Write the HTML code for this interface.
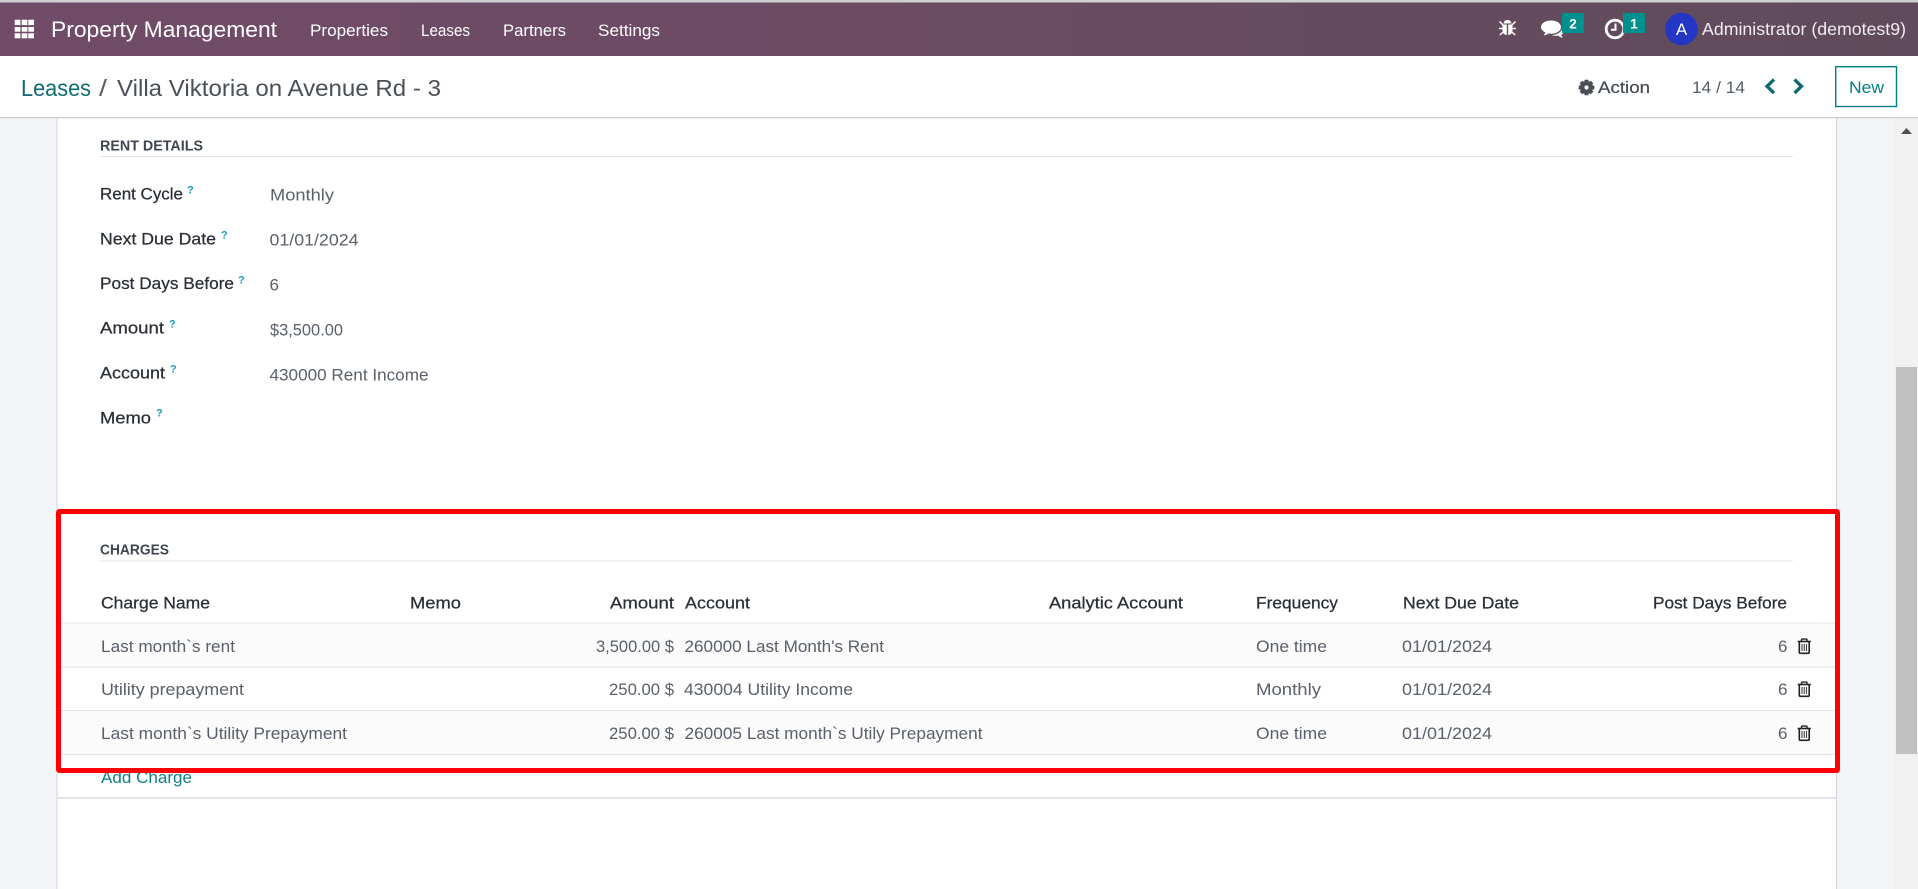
<!DOCTYPE html>
<html lang="en"><head><meta charset="utf-8"><title>Leases</title>
<style>
html,body{margin:0;padding:0;width:1918px;height:889px;overflow:hidden;background:#f4f5f9}
svg{display:block;position:absolute;left:0;top:0}
text{font-family:"Liberation Sans",sans-serif;white-space:pre}
.nav{fill:#fff;font-size:17px}
.lb{fill:#2a2f36;font-size:16.5px;stroke:#2a2f36;stroke-width:.25}
.v{fill:#5a6069;font-size:16.5px}
.q{fill:#1a9bc0;font-size:11px;font-weight:bold}
.h{fill:#3f4650;font-size:14.5px;font-weight:bold}
.th{fill:#2a2f36;font-size:16.5px;stroke:#2a2f36;stroke-width:.25}
</style></head><body>
<svg width="1918" height="889" viewBox="0 0 1918 889" xmlns="http://www.w3.org/2000/svg">
<defs>
<linearGradient id="g" x1="0" x2="1" y1="0" y2="0"><stop offset="0" stop-color="#714b67"/><stop offset=".45" stop-color="#6c4b63"/><stop offset="1" stop-color="#5f4b5b"/></linearGradient>
<g id="trash" fill="none" stroke="#222">
<path d="M.7 3h13.1" stroke-width="1.6"/><path d="M4.5 3V1.2Q4.500.6 5.200.6h4.100q.7 0 .7.6V3" stroke-width="1.4"/><path d="M2.300 3v10.800q0 1 1 1h7.900q1 0 1-1V3" stroke-width="1.600"/><path d="M5 5.500v7M7.250 5.500v7M9.500 5.500v7" stroke-width="1.100" stroke="#444"/>
</g>
</defs>
<!-- page -->
<rect width="1918" height="889" fill="#f4f5f9"/>
<rect x="57" y="117" width="1780" height="772" fill="#fff"/>
<rect x="56.500" y="117" width="1" height="772" fill="#d0d2d8"/>
<rect x="1836" y="117" width="1" height="772" fill="#d0d2d8"/>
<!-- scrollbar -->
<rect x="1894" y="117" width="24" height="772" fill="#f1f1f1"/>
<path d="M1901 134l5.500-6 5.500 6z" fill="#505050"/>
<rect x="1896" y="367" width="21" height="387" fill="#c1c1c1"/>
<!-- top bar -->
<rect width="1918" height="2.500" fill="#cfcfcf"/>
<rect y="2.500" width="1918" height="53.500" fill="url(#g)"/>
<g fill="#fff">
<rect x="14.700" y="19.700" width="5.700" height="5.400"/><rect x="21.700" y="19.700" width="5.700" height="5.400"/><rect x="28.300" y="19.700" width="5.700" height="5.400"/>
<rect x="14.700" y="27" width="5.700" height="4.700"/><rect x="21.700" y="27" width="5.700" height="4.700"/><rect x="28.300" y="27" width="5.700" height="4.700"/>
<rect x="14.700" y="33.300" width="5.700" height="5"/><rect x="21.700" y="33.300" width="5.700" height="5"/><rect x="28.300" y="33.300" width="5.700" height="5"/>
</g>
<text x="51" y="37" fill="#fff" font-size="22" textLength="226" lengthAdjust="spacingAndGlyphs">Property Management</text>
<text class="nav" x="310" y="36" textLength="78" lengthAdjust="spacingAndGlyphs">Properties</text>
<text class="nav" x="421" y="36" textLength="49" lengthAdjust="spacingAndGlyphs">Leases</text>
<text class="nav" x="503" y="36" textLength="63" lengthAdjust="spacingAndGlyphs">Partners</text>
<text class="nav" x="598" y="36" textLength="62" lengthAdjust="spacingAndGlyphs">Settings</text>
<!-- systray -->
<g fill="#fff">
<!-- bug -->
<path d="M1503.500 23.500a4 3.600 0 0 1 8 0z"/>
<path d="M1502.500 24.500h4.300v10.500q-4.300-.3-4.300-4.500zM1508.200 24.500h4.300v6q0 4.200-4.300 4.500z"/>
<path d="M1499.500 21.500l3.500 3.500M1515.500 21.500l-3.500 3.500M1499 28.500h4M1516 28.500h-4M1499.800 35l3.400-3M1515.200 35l-3.400-3" stroke="#fff" stroke-width="1.500" fill="none"/>
<!-- comments -->
<path d="M1551 20.500c5.800 0 10 2.900 10 6.600s-4.200 6.600-10 6.600c-1 0-1.800-.1-2.600-.2-1.300 1-3 1.700-4.900 2 .8-.8 1.600-2 1.800-3.200-2.600-1.200-4.300-3-4.300-5.200 0-3.700 4.200-6.600 10-6.600z"/>
<path d="M1562.300 27.500c1.200 1 1.700 2.200 1.700 3.300 0 1.700-1 3.100-2.700 4.100.2 1 .9 2.100 1.700 2.900-2-.3-3.700-1.100-4.900-2.200-.8.200-1.600.2-2.400.2-1.400 0-2.800-.2-3.900-.6 5.800-.4 10.500-3.600 10.500-7.700z"/>
</g>
<!-- clock -->
<circle cx="1615" cy="29" r="8.800" fill="none" stroke="#fff" stroke-width="2.800"/>
<path d="M1615.500 23.500v6.300h-4.500" fill="none" stroke="#fff" stroke-width="2"/>
<rect x="1562" y="13" width="22" height="20" fill="#00918f"/>
<text x="1573" y="28.500" fill="#fff" font-size="13.500" font-weight="bold" text-anchor="middle">2</text>
<rect x="1623" y="13" width="22" height="20" fill="#00918f"/>
<text x="1634" y="28.500" fill="#fff" font-size="13.500" font-weight="bold" text-anchor="middle">1</text>
<circle cx="1681.500" cy="29" r="16.300" fill="#2436c4"/>
<text x="1681.500" y="35" fill="#fff" font-size="17" text-anchor="middle">A</text>
<text x="1702" y="35" fill="#f1edf0" font-size="17.500" textLength="204" lengthAdjust="spacingAndGlyphs">Administrator (demotest9)</text>
<!-- control panel -->
<rect y="56" width="1918" height="61" fill="#fff"/>
<rect y="117" width="1918" height="1.300" fill="#cfd0d6"/>
<text x="21" y="96" fill="#0f6b70" font-size="23" textLength="70" lengthAdjust="spacingAndGlyphs">Leases</text>
<text x="99" y="96" fill="#5a6069" font-size="23" textLength="8" lengthAdjust="spacingAndGlyphs">/</text>
<text x="117" y="96" fill="#4a5058" font-size="23" textLength="324" lengthAdjust="spacingAndGlyphs">Villa Viktoria on Avenue Rd - 3</text>
<!-- gear -->
<g transform="translate(1586.500,87.500)">
<circle r="4.300" fill="none" stroke="#4a4f57" stroke-width="4.400"/>
<path d="M-2-7.800h4v3h-4zM-2 4.800h4v3h-4zM-7.800-2h3v4h-3zM4.800-2h3v4h-3z" fill="#4a4f57"/>
<path d="M-2-7.800h4v3h-4zM-2 4.800h4v3h-4zM-7.800-2h3v4h-3zM4.800-2h3v4h-3z" fill="#4a4f57" transform="rotate(45)"/>
</g>
<text x="1598" y="93" fill="#444a52" font-size="17" stroke="#444a52" stroke-width=".2" textLength="52" lengthAdjust="spacingAndGlyphs">Action</text>
<text x="1692" y="93" fill="#555b63" font-size="17" textLength="53" lengthAdjust="spacingAndGlyphs">14 / 14</text>
<path d="M1774 79.500l-7 6.800 7 6.800" fill="none" stroke="#0b6a70" stroke-width="3.300"/>
<path d="M1794.500 79.500l7 6.800-7 6.800" fill="none" stroke="#0b6a70" stroke-width="3.300"/>
<rect x="1835.700" y="66.700" width="60.800" height="39.800" fill="#fff" stroke="#017e84" stroke-width="1.400"/>
<text x="1849" y="93" fill="#017e84" font-size="17" textLength="35" lengthAdjust="spacingAndGlyphs">New</text>
<!-- rent details -->
<text class="h" x="100" y="150.500" textLength="103" lengthAdjust="spacingAndGlyphs">RENT DETAILS</text>
<rect x="100" y="156" width="1693" height="1" fill="#e2e4e7"/>
<text class="lb" x="100" y="199.500" textLength="83" lengthAdjust="spacingAndGlyphs">Rent Cycle</text><text class="q" x="187" y="193.500">?</text>
<text class="lb" x="100" y="244.500" textLength="116" lengthAdjust="spacingAndGlyphs">Next Due Date</text><text class="q" x="221" y="238.500">?</text>
<text class="lb" x="100" y="289" textLength="134" lengthAdjust="spacingAndGlyphs">Post Days Before</text><text class="q" x="238" y="283.500">?</text>
<text class="lb" x="100" y="333.500" textLength="64" lengthAdjust="spacingAndGlyphs">Amount</text><text class="q" x="169" y="327.500">?</text>
<text class="lb" x="100" y="378.500" textLength="65" lengthAdjust="spacingAndGlyphs">Account</text><text class="q" x="170" y="372.500">?</text>
<text class="lb" x="100" y="423.500" textLength="51" lengthAdjust="spacingAndGlyphs">Memo</text><text class="q" x="156" y="416.500">?</text>
<text class="v" x="270" y="200.500" textLength="64" lengthAdjust="spacingAndGlyphs">Monthly</text>
<text class="v" x="269.500" y="245.500" textLength="89" lengthAdjust="spacingAndGlyphs">01/01/2024</text>
<text class="v" x="269.500" y="290.500" textLength="9.500" lengthAdjust="spacingAndGlyphs">6</text>
<text class="v" x="270" y="335.500" textLength="73" lengthAdjust="spacingAndGlyphs">$3,500.00</text>
<text class="v" x="269.500" y="380.500" textLength="159" lengthAdjust="spacingAndGlyphs">430000 Rent Income</text>
<!-- charges -->
<text class="h" x="100" y="554.500" textLength="69" lengthAdjust="spacingAndGlyphs">CHARGES</text>
<rect x="100" y="560.500" width="1693" height="1" fill="#e2e4e7"/>
<rect x="58" y="623" width="1778" height="44" fill="#fbfbfc"/>
<rect x="58" y="710" width="1778" height="44" fill="#fbfbfc"/>
<rect x="58" y="622.600" width="1778" height="1" fill="#e2e4e7"/>
<rect x="58" y="666.600" width="1778" height="1" fill="#e2e4e7"/>
<rect x="58" y="710" width="1778" height="1" fill="#e2e4e7"/>
<rect x="58" y="754" width="1778" height="1" fill="#e2e4e7"/>
<text class="th" x="101" y="608.500" textLength="109" lengthAdjust="spacingAndGlyphs">Charge Name</text>
<text class="th" x="410" y="608.500" textLength="51" lengthAdjust="spacingAndGlyphs">Memo</text>
<text class="th" x="610" y="608.500" textLength="64" lengthAdjust="spacingAndGlyphs">Amount</text>
<text class="th" x="685" y="608.500" textLength="65" lengthAdjust="spacingAndGlyphs">Account</text>
<text class="th" x="1049" y="608.500" textLength="134" lengthAdjust="spacingAndGlyphs">Analytic Account</text>
<text class="th" x="1256" y="608.500" textLength="82" lengthAdjust="spacingAndGlyphs">Frequency</text>
<text class="th" x="1403" y="608.500" textLength="116" lengthAdjust="spacingAndGlyphs">Next Due Date</text>
<text class="th" x="1653" y="608.500" textLength="134" lengthAdjust="spacingAndGlyphs">Post Days Before</text>
<text class="v" x="101" y="652" textLength="134" lengthAdjust="spacingAndGlyphs">Last month`s rent</text>
<text class="v" x="596" y="652" textLength="78" lengthAdjust="spacingAndGlyphs">3,500.00 $</text>
<text class="v" x="684.500" y="652" textLength="199.500" lengthAdjust="spacingAndGlyphs">260000 Last Month's Rent</text>
<text class="v" x="1256" y="652" textLength="71" lengthAdjust="spacingAndGlyphs">One time</text>
<text class="v" x="1402" y="652" textLength="90" lengthAdjust="spacingAndGlyphs">01/01/2024</text>
<text class="v" x="1778" y="652" textLength="9.500" lengthAdjust="spacingAndGlyphs">6</text>
<text class="v" x="101" y="695" textLength="143" lengthAdjust="spacingAndGlyphs">Utility prepayment</text>
<text class="v" x="609" y="695" textLength="65" lengthAdjust="spacingAndGlyphs">250.00 $</text>
<text class="v" x="684" y="695" textLength="169" lengthAdjust="spacingAndGlyphs">430004 Utility Income</text>
<text class="v" x="1256" y="695" textLength="65" lengthAdjust="spacingAndGlyphs">Monthly</text>
<text class="v" x="1402" y="695" textLength="90" lengthAdjust="spacingAndGlyphs">01/01/2024</text>
<text class="v" x="1778" y="695" textLength="9.500" lengthAdjust="spacingAndGlyphs">6</text>
<text class="v" x="101" y="739" textLength="246" lengthAdjust="spacingAndGlyphs">Last month`s Utility Prepayment</text>
<text class="v" x="609" y="739" textLength="65" lengthAdjust="spacingAndGlyphs">250.00 $</text>
<text class="v" x="684.500" y="739" textLength="298" lengthAdjust="spacingAndGlyphs">260005 Last month`s Utily Prepayment</text>
<text class="v" x="1256" y="739" textLength="71" lengthAdjust="spacingAndGlyphs">One time</text>
<text class="v" x="1402" y="739" textLength="90" lengthAdjust="spacingAndGlyphs">01/01/2024</text>
<text class="v" x="1778" y="739" textLength="9.500" lengthAdjust="spacingAndGlyphs">6</text>
<use href="#trash" x="1797" y="638.500"/>
<use href="#trash" x="1797" y="681.500"/>
<use href="#trash" x="1797" y="725.500"/>
<text x="101" y="783" fill="#0f7f85" font-size="16.500" textLength="91" lengthAdjust="spacingAndGlyphs">Add Charge</text>
<rect x="58" y="797" width="1778" height="2" fill="#e2e4e7"/>
<!-- highlight -->
<rect x="58.500" y="511.500" width="1779" height="259" rx="1" fill="none" stroke="#ff0000" stroke-width="5"/>
</svg>
</body></html>
